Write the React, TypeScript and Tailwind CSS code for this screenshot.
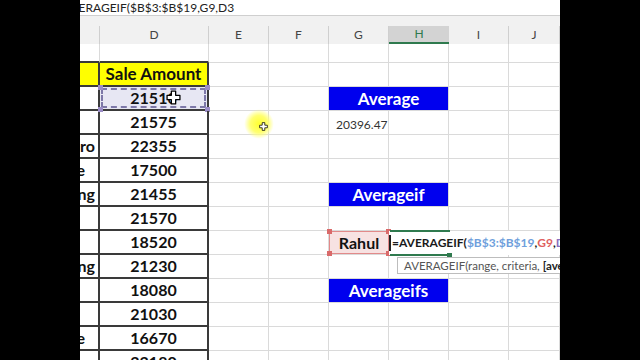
import React from 'react';

type BodyRow = {
  c?: string;
  short?: boolean;
  d: string;
  sel?: boolean;
  gh?: string;
  g?: string;
  rahul?: boolean;
};

const body: BodyRow[] = [
  { d: '21510', sel: true, gh: 'Average' },
  { d: '21575', g: '20396.47' },
  { c: 'Pedro', d: '22355' },
  { c: 'Jane', short: true, d: '17500' },
  { c: 'Wang', d: '21455', gh: 'Averageif' },
  { d: '21570' },
  { d: '18520', rahul: true },
  { c: 'Chang', d: '21230' },
  { d: '18080', gh: 'Averageifs' },
  { d: '21030' },
  { c: 'Mike', short: true, d: '16670' },
  { d: '22180' },
];

const light = 'shrink-0 h-full border-r border-b border-[#dadada]';
const dark = 'shrink-0 h-full border-r-2 border-b-2 border-[#3a3a3a]';

const PlusCursor = ({ size }: { size: number }) => (
  <svg width={size} height={size} viewBox="0 0 14 14">
    <path
      d="M5 1h4v4h4v4H9v4H5V9H1V5h4z"
      fill="#ffffff"
      stroke="#000000"
      strokeWidth="1.2"
      strokeLinejoin="round"
    />
  </svg>
);

const Corner = ({ pos, color }: { pos: string; color: string }) => (
  <span className={`absolute w-[5px] h-[5px] ${pos} ${color}`} />
);

function Row({ r }: { r: BodyRow }) {
  return (
    <div className="flex h-[24px]">
      <div
        className={`w-[20px] ${dark} flex items-center justify-end overflow-hidden ${r.short ? 'pr-[13px]' : 'pr-[3px]'}`}
      >
        {r.c && <span className="whitespace-nowrap font-bold text-[16px] text-[#111]">{r.c}</span>}
      </div>
      <div
        className={`w-[109px] ${dark} relative flex items-center justify-center ${r.sel ? 'bg-[#e7e7f3]' : ''}`}
      >
        {r.sel && (
          <>
            <div className="absolute inset-[1px] border-2 border-dashed border-[#7d78a8]" />
            <Corner pos="-left-[2px] -top-[2px]" color="bg-[#9a8cc6]" />
            <Corner pos="-left-[2px] -bottom-[3px]" color="bg-[#9a8cc6]" />
            <Corner pos="-right-[3px] -top-[2px]" color="bg-[#9a8cc6]" />
            <Corner pos="-right-[3px] -bottom-[3px]" color="bg-[#9a8cc6]" />
          </>
        )}
        <span className="relative font-bold text-[16px] text-[#111]">{r.d}</span>
      </div>
      <div className={`w-[60px] ${light}`} />
      <div className={`w-[60px] ${light}`} />
      {r.gh ? (
        <div className={`w-[120px] ${light} bg-[#0000ee] flex items-center justify-center`}>
          <span className="font-bold text-[17px] text-white">{r.gh}</span>
        </div>
      ) : r.rahul ? (
        <>
          <div className="w-[60px] shrink-0 h-full border-b border-[#dadada] relative bg-[#f7e2e2] flex items-center justify-center">
            <div className="absolute inset-0 border border-[#e28a8a]" />
            <Corner pos="-left-[2px] -top-[2px]" color="bg-[#d96a6a]" />
            <Corner pos="-left-[2px] -bottom-[2px]" color="bg-[#d96a6a]" />
            <Corner pos="-right-[2px] -top-[2px]" color="bg-[#d96a6a]" />
            <Corner pos="-right-[2px] -bottom-[2px]" color="bg-[#d96a6a]" />
            <span className="relative font-bold text-[16px] text-[#111]">Rahul</span>
          </div>
          <div className="w-[60px] shrink-0 h-full relative">
            <div className="absolute left-0 top-0 bottom-0 w-[175px] bg-white z-10 flex items-center pl-[3px] whitespace-nowrap text-[12px] font-bold">
              <span className="text-[#1a1a1a]">=AVERAGEIF(</span>
              <span className="text-[#6f9fdc]">$B$3:$B$19</span>
              <span className="text-[#1a1a1a]">,</span>
              <span className="text-[#e06060]">G9</span>
              <span className="text-[#1a1a1a]">,</span>
              <span className="text-[#8a6fc0]">D3</span>
            </div>
            <div className="absolute left-[1px] top-[-1px] w-[60px] h-[2px] bg-[#2f7a4e] z-20" />
            <div className="absolute left-[1px] bottom-[-1px] w-[60px] h-[2px] bg-[#2f7a4e] z-20" />
            <div className="absolute left-0 top-[4px] w-[2px] h-[16px] bg-[#222] z-20" />
            <span className="absolute right-[-3px] bottom-[-3px] w-[5px] h-[5px] bg-[#2f7a4e] z-20" />
          </div>
        </>
      ) : (
        <>
          <div className={`w-[60px] ${light} flex items-center pl-[7px] pt-[5px]`}>
            {r.g && <span className="text-[12px] text-[#333]">{r.g}</span>}
          </div>
          <div className={`w-[60px] ${light}`} />
        </>
      )}
      <div className={`w-[60px] ${light}`} />
      <div className={`w-[51px] ${light}`} />
    </div>
  );
}

const headers = [
  { w: 'w-[20px]', l: '' },
  { w: 'w-[109px]', l: 'D' },
  { w: 'w-[60px]', l: 'E' },
  { w: 'w-[60px]', l: 'F' },
  { w: 'w-[60px]', l: 'G' },
  { w: 'w-[60px]', l: 'H' },
  { w: 'w-[60px]', l: 'I' },
  { w: 'w-[51px]', l: 'J' },
];

export default function App() {
  return (
    <div className="w-[640px] h-[360px] bg-black flex overflow-hidden font-['Lato','Liberation_Sans',sans-serif]">
      <div className="w-[80px] shrink-0" />
      <div className="w-[480px] shrink-0 h-full bg-white relative overflow-hidden flex flex-col">
        {/* formula bar */}
        <div className="h-[16px] shrink-0 bg-white overflow-hidden flex items-center border-b border-[#cfcfcf]">
          <span className="whitespace-nowrap text-[12px] text-[#222] -ml-[24px]">
            =AVERAGEIF($B$3:$B$19,G9,D3
          </span>
        </div>
        {/* column headers */}
        <div className="h-[28px] shrink-0 bg-[#f1f1f1] flex items-end">
          {headers.map((h) =>
            h.l === 'H' ? (
              <div
                key={h.l}
                className={`${h.w} shrink-0 h-[18px] bg-[#d3d3d3] border-b-2 border-[#2f7a4e] flex items-center justify-center text-[12px] text-[#2f7a4e]`}
              >
                H
              </div>
            ) : (
              <div
                key={h.w + h.l}
                className={`${h.w} shrink-0 h-[18px] flex items-center justify-center text-[12px] text-[#444] border-r border-[#cfcfcf]`}
              >
                {h.l}
              </div>
            )
          )}
        </div>
        {/* row 1 */}
        <div className="flex h-[19px] shrink-0">
          <div className="w-[20px] shrink-0 h-full border-b-2 border-[#3a3a3a] border-r border-r-[#dadada]" />
          <div className="w-[109px] shrink-0 h-full border-b-2 border-[#3a3a3a] border-r border-r-[#dadada]" />
          <div className={`w-[60px] ${light}`} />
          <div className={`w-[60px] ${light}`} />
          <div className={`w-[60px] ${light}`} />
          <div className={`w-[60px] ${light}`} />
          <div className={`w-[60px] ${light}`} />
          <div className={`w-[51px] ${light}`} />
        </div>
        {/* header row */}
        <div className="flex h-[24px] shrink-0">
          <div className={`w-[20px] ${dark} bg-[#ffff00]`} />
          <div className={`w-[109px] ${dark} bg-[#ffff00] flex items-center justify-center`}>
            <span className="font-bold text-[17px] text-[#111]">Sale Amount</span>
          </div>
          <div className={`w-[60px] ${light}`} />
          <div className={`w-[60px] ${light}`} />
          <div className={`w-[60px] ${light}`} />
          <div className={`w-[60px] ${light}`} />
          <div className={`w-[60px] ${light}`} />
          <div className={`w-[51px] ${light}`} />
        </div>
        {body.map((r, i) => (
          <div key={i} className="shrink-0">
            <Row r={r} />
          </div>
        ))}

        {/* function tooltip */}
        <div className="absolute left-[317px] top-[257px] h-[17px] w-[220px] bg-white border border-[#bdbdbd] z-30 flex items-center pl-[6px] whitespace-nowrap text-[11.5px] text-[#555]">
          AVERAGEIF(range, criteria,&nbsp;<span className="font-bold text-[#222]">[average_range])</span>
        </div>

        {/* mouse cursors */}
        <div className="absolute left-[86px] top-[90px] z-30">
          <PlusCursor size={15} />
        </div>
        <div className="absolute left-[164px] top-[109px] w-[30px] h-[30px] rounded-full bg-[radial-gradient(circle,#ffff30_0%,#ffff70_40%,rgba(255,255,150,0)_70%)] z-30" />
        <div className="absolute left-[179px] top-[122px] z-30">
          <PlusCursor size={9} />
        </div>
      </div>
      <div className="w-[80px] shrink-0" />
    </div>
  );
}
